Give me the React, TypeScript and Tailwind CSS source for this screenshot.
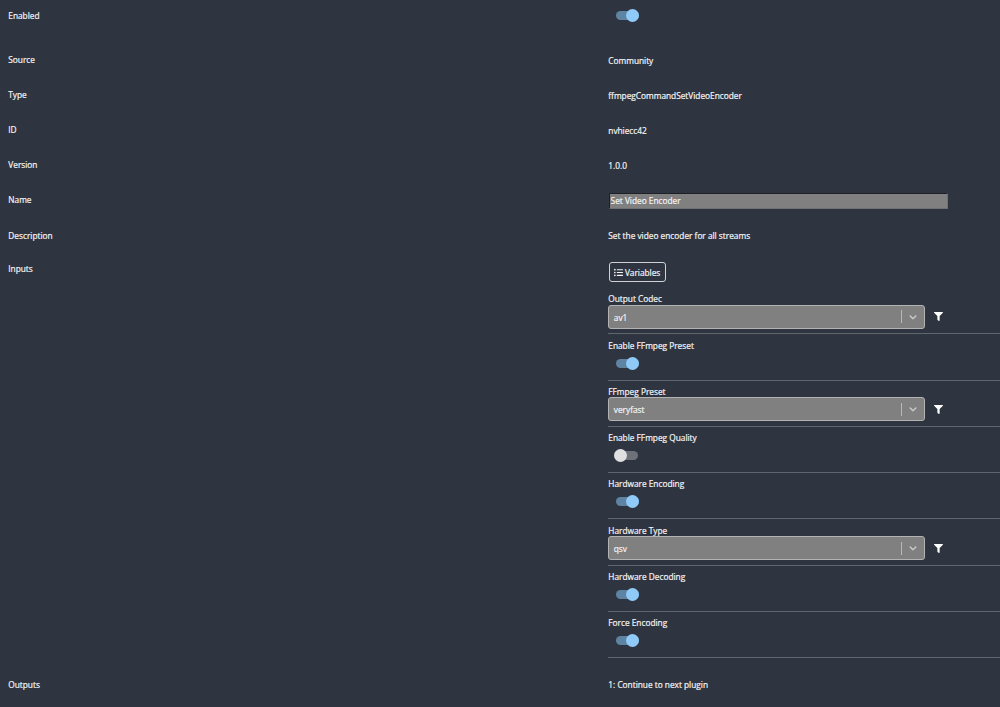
import type { ReactNode } from 'react'
import { FaFilter, FaListUl } from 'react-icons/fa'

type PluginInput =
  | { label: string; kind: 'select'; value: string }
  | { label: string; kind: 'switch'; value: boolean }

const INPUTS: PluginInput[] = [
  { label: 'Output Codec', kind: 'select', value: 'av1' },
  { label: 'Enable FFmpeg Preset', kind: 'switch', value: true },
  { label: 'FFmpeg Preset', kind: 'select', value: 'veryfast' },
  { label: 'Enable FFmpeg Quality', kind: 'switch', value: false },
  { label: 'Hardware Encoding', kind: 'switch', value: true },
  { label: 'Hardware Type', kind: 'select', value: 'qsv' },
  { label: 'Hardware Decoding', kind: 'switch', value: true },
  { label: 'Force Encoding', kind: 'switch', value: true },
]

const DETAILS = [
  { label: 'Source', value: 'Community' },
  { label: 'Type', value: 'ffmpegCommandSetVideoEncoder' },
  { label: 'ID', value: 'nvhiecc42' },
  { label: 'Version', value: '1.0.0' },
]

function Switch({ on }: { on: boolean }) {
  return (
    <button
      role="switch"
      aria-checked={on}
      className={`flex h-3 w-6 items-center ${on ? 'ml-[7.5px]' : 'ml-[6px]'}`}
    >
      {on ? (
        <span className="flex h-[9px] w-[23.5px] items-center justify-end rounded-full bg-[#5f83a3]">
          <span className="size-[13px] shrink-0 rounded-full bg-[#90caf9]" />
        </span>
      ) : (
        <span className="flex h-[9px] w-[23.5px] items-center rounded-full bg-[#6d717a]">
          <span className="size-[13px] shrink-0 rounded-full bg-[#e0e0e0]" />
        </span>
      )}
    </button>
  )
}

function Select({ value }: { value: string }) {
  return (
    <div className="flex items-center">
      <div className="flex h-6 w-[317px] items-center rounded-[3px] border border-[#b3b3b3] bg-[#808080] pl-[4.5px]">
        <span className="flex-1 pt-[1.5px]">{value}</span>
        <span className="h-[13px] w-px bg-[#b9b9b9]" />
        <svg viewBox="0 0 20 20" className="mx-[5px] size-3 fill-[#cccccc]">
          <path d="M4.516 7.548c0.436-0.446 1.043-0.481 1.576 0l3.908 3.747 3.908-3.747c0.533-0.481 1.141-0.446 1.574 0 0.436 0.445 0.408 1.197 0 1.615-0.406 0.418-4.695 4.502-4.695 4.502-0.217 0.223-0.502 0.335-0.787 0.335s-0.57-0.112-0.789-0.335c0 0-4.287-4.084-4.695-4.502s-0.436-1.17 0-1.615z" />
        </svg>
      </div>
      <FaFilter className="ml-[9px] size-[9px] text-white" />
    </div>
  )
}

function Row({ label, className, children }: { label: string; className: string; children: ReactNode }) {
  return (
    <div className={`grid grid-cols-[600px_1fr] pl-[8.3px] ${className}`}>
      <div>{label}</div>
      <div>{children}</div>
    </div>
  )
}

export default function App() {
  return (
    <div className="h-[707px] overflow-hidden bg-[#2f3540] font-['Open_Sans','Noto_Sans',sans-serif] text-[8.3px] leading-3 font-medium text-[#f4f4f5] [-webkit-text-stroke:0.2px]">
      <Row label="Enabled" className="h-[54px] pt-[9.5px]">
        <Switch on />
      </Row>

      {DETAILS.map(({ label, value }) => (
        <Row key={label} label={label} className="h-[35px]">
          <p className="pt-px">{value}</p>
        </Row>
      ))}

      <Row label="Name" className="h-[36px]">
        <input
          className="-mt-px ml-[0.3px] block h-4 w-[339px] border border-[#6f7073] border-t-[#1d2027] border-l-[#1d2027] bg-[#808080] pb-px pl-px outline-none"
          defaultValue="Set Video Encoder"
        />
      </Row>

      <Row label="Description" className="h-[33px]">
        <p>Set the video encoder for all streams</p>
      </Row>

      <Row label="Inputs" className="h-[416px]">
        <button className="-mt-px ml-[0.3px] flex h-5 w-[57px] items-center justify-center gap-0.5 rounded-[3px] border border-[#d0d2d6] pt-px">
          <FaListUl className="size-[9px]" />
          Variables
        </button>
        <div className="pt-[6px]">
          {INPUTS.map((input) => (
            <div key={input.label} className="h-[46.25px] border-b border-[#61656e] pt-[5.4px]">
              <p className="h-[11.6px]">{input.label}</p>
              {input.kind === 'select' ? (
                <Select value={input.value} />
              ) : (
                <div className="pt-[6px]">
                  <Switch on={input.value} />
                </div>
              )}
            </div>
          ))}
        </div>
      </Row>

      <Row label="Outputs" className="">
        <p>1: Continue to next plugin</p>
      </Row>
    </div>
  )
}
